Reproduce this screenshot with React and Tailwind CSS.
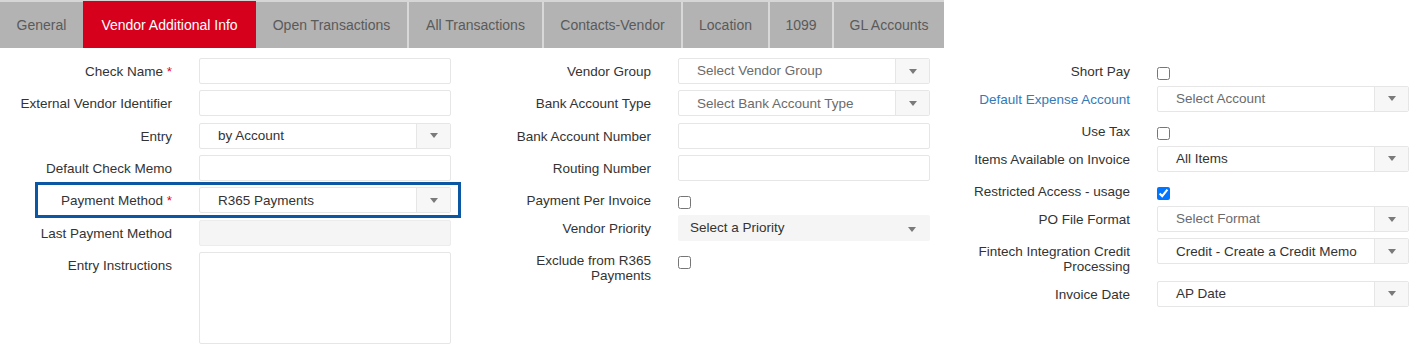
const tabs = [
  { t: 'General', w: 'w-[83px]' },
  { t: 'Vendor Additional Info', w: 'w-[173px]' },
  { t: 'Open Transactions', w: 'w-[151px]' },
  { t: 'All Transactions', w: 'w-[135px]' },
  { t: 'Contacts-Vendor', w: 'w-[139px]' },
  { t: 'Location', w: 'w-[87px]' },
  { t: '1099', w: 'w-[64px]' },
  { t: 'GL Accounts', w: 'w-[112px]' },
]

function Caret() {
  return <span className="block w-0 h-0 border-x-[4.5px] border-t-[5px] border-x-transparent border-t-[#7a7a7a]" />
}

function Row({ label, required, blue, children }) {
  return (
    <div className="flex items-start gap-[27px]">
      <div className={`w-[172px] shrink-0 text-right pt-[6px] leading-[15px] ${blue ? 'text-[#337ab7]' : 'text-[#333]'}`}>
        {label}
        {required && <span className="text-[#e4002b]"> *</span>}
      </div>
      {children}
    </div>
  )
}

function TextInput({ disabled }) {
  return (
    <div className={`w-[252px] h-[26px] border rounded-[2px] ${disabled ? 'bg-[#f5f5f5] border-[#ececec]' : 'bg-white border-[#e6e6e6]'}`} />
  )
}

function Select({ value, placeholder }) {
  return (
    <div className="w-[252px] h-[26px] flex border border-[#e6e6e6] rounded-[2px] bg-white">
      <div className={`flex-1 flex items-center pl-[18px] leading-none ${placeholder ? 'text-[#6b6b6b]' : 'text-[#333]'}`}>
        {value}
      </div>
      <div className="w-[34px] flex items-center justify-center bg-[#f7f7f7] border-l border-[#e6e6e6]">
        <Caret />
      </div>
    </div>
  )
}

function Check({ checked }) {
  return (
    <div className="h-[21.5px] pt-[9px] flex">
      <input type="checkbox" defaultChecked={checked} className="w-[13px] h-[13px] m-0" />
    </div>
  )
}

export default function App() {
  return (
    <div className="w-[1416px] h-[352px] bg-white overflow-hidden" style={{ fontFamily: '"Liberation Sans", Arial, sans-serif' }}>
      {/* Tab strip */}
      <div className="flex w-[944px] h-[48px] bg-[#d6d6d6] text-[14px]">
        {tabs.map(({ t, w }, i) => {
          const active = i === 1
          const sep = i > 2
          return (
            <div
              key={t}
              className={`${w} shrink-0 flex items-center justify-center pt-[1px] ${active ? 'bg-[#d6001c] text-white mt-[1px]' : 'bg-[#b3b3b3] text-[#5a5a5a] mt-[2px]'} ${sep ? 'border-l-2 border-[#d8d8d8]' : ''}`}
            >
              {t}
            </div>
          )
        })}
      </div>

      {/* Form */}
      <div className="flex pt-[10px] text-[13.5px]">
        {/* Left column */}
        <div className="w-[479px] shrink-0 flex flex-col gap-[6.33px]">
          <Row label="Check Name" required>
            <TextInput />
          </Row>
          <Row label="External Vendor Identifier">
            <TextInput />
          </Row>
          <Row label="Entry">
            <Select value="by Account" />
          </Row>
          <Row label="Default Check Memo">
            <TextInput />
          </Row>
          <div className="relative">
            <Row label="Payment Method" required>
              <Select value="R365 Payments" />
            </Row>
            <div className="absolute left-[35px] right-[18px] -top-[5px] -bottom-[5px] border-[3px] border-[#0b57a4] pointer-events-none" />
          </div>
          <Row label="Last Payment Method">
            <TextInput disabled />
          </Row>
          <Row label="Entry Instructions">
            <div className="w-[252px] h-[92px] border border-[#e6e6e6] rounded-[2px] bg-white" />
          </Row>
        </div>

        {/* Middle column */}
        <div className="w-[479px] shrink-0 flex flex-col gap-[6.33px]">
          <Row label="Vendor Group">
            <Select value="Select Vendor Group" placeholder />
          </Row>
          <Row label="Bank Account Type">
            <Select value="Select Bank Account Type" placeholder />
          </Row>
          <Row label="Bank Account Number">
            <TextInput />
          </Row>
          <Row label="Routing Number">
            <TextInput />
          </Row>
          <Row label="Payment Per Invoice">
            <Check />
          </Row>
          <Row label="Vendor Priority">
            <div className="w-[252px] h-[26px] flex items-center justify-between pl-[12px] pr-[14px] bg-[#f5f5f5] rounded-[2px] text-[#333]">
              <span>Select a Priority</span>
              <span className="mt-[2px]"><Caret /></span>
            </div>
          </Row>
          <Row label="Exclude from R365 Payments">
            <Check />
          </Row>
        </div>

        {/* Right column */}
        <div className="flex-1 flex flex-col gap-[6.33px]">
          <Row label="Short Pay">
            <Check />
          </Row>
          <Row label="Default Expense Account" blue>
            <Select value="Select Account" placeholder />
          </Row>
          <Row label="Use Tax">
            <Check />
          </Row>
          <Row label="Items Available on Invoice">
            <Select value="All Items" />
          </Row>
          <Row label="Restricted Access - usage">
            <Check checked />
          </Row>
          <Row label="PO File Format">
            <Select value="Select Format" placeholder />
          </Row>
          <Row label="Fintech Integration Credit Processing">
            <Select value="Credit - Create a Credit Memo" />
          </Row>
          <Row label="Invoice Date">
            <Select value="AP Date" />
          </Row>
        </div>
      </div>
    </div>
  )
}
